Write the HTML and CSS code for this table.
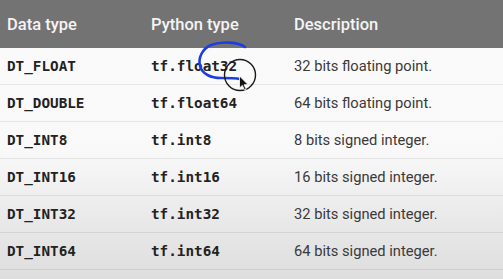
FILE: index.html
```html
<!DOCTYPE html>
<html>
<head>
<meta charset="utf-8">
<link rel="stylesheet" href="styles.css">
</head>
<body>
<div class="table">
  <div class="row head">
    <div class="cell">Data type</div>
    <div class="cell">Python type</div>
    <div class="cell">Description</div>
  </div>
  <div class="row">
    <div class="cell mono">DT_FLOAT</div>
    <div class="cell mono">tf.float32</div>
    <div class="cell desc">32 bits floating point.</div>
  </div>
  <div class="row">
    <div class="cell mono">DT_DOUBLE</div>
    <div class="cell mono">tf.float64</div>
    <div class="cell desc">64 bits floating point.</div>
  </div>
  <div class="row">
    <div class="cell mono">DT_INT8</div>
    <div class="cell mono">tf.int8</div>
    <div class="cell desc">8 bits signed integer.</div>
  </div>
  <div class="row">
    <div class="cell mono">DT_INT16</div>
    <div class="cell mono">tf.int16</div>
    <div class="cell desc">16 bits signed integer.</div>
  </div>
  <div class="row">
    <div class="cell mono">DT_INT32</div>
    <div class="cell mono">tf.int32</div>
    <div class="cell desc">32 bits signed integer.</div>
  </div>
  <div class="row">
    <div class="cell mono">DT_INT64</div>
    <div class="cell mono">tf.int64</div>
    <div class="cell desc">64 bits signed integer.</div>
  </div>
</div>
<svg class="annot" width="503" height="279" viewBox="0 0 503 279">
  <path d="M245 47 C238 42 222 41 211 45 C202 49 198 58 200 66 C202 74 211 78 221 78 C229 78 235 78 240 79" fill="none" stroke="#1c3ee0" stroke-width="2.6" stroke-linecap="round"/>
  <circle cx="240" cy="75" r="15.5" fill="none" stroke="#1a1a1a" stroke-width="1.4"/>
  <path d="M239.5 76 L239.5 88 L242.3 85.4 L244.5 90 L246.2 89.2 L244 84.8 L248 84.6 Z" fill="#111" stroke="#fff" stroke-width="0.8" stroke-linejoin="round"/>
</svg>
</body>
</html>
```
FILE: styles.css
```css
html, body {
  margin: 0;
  padding: 0;
}
body {
  width: 503px;
  height: 279px;
  overflow: hidden;
  position: relative;
  background: linear-gradient(to bottom, #fafafa 0px, #f9f9f9 150px, #e9e9e9 220px, #dedede 279px);
}
.table {
  display: flex;
  flex-direction: column;
}
.row {
  display: grid;
  grid-template-columns: 144px 143px 1fr;
  height: 36px;
  align-items: center;
  border-bottom: 1px solid rgba(0, 0, 0, 0.08);
}
.row.head {
  height: 48px;
  background: #737373;
  border-bottom: none;
}
.cell {
  padding-left: 7px;
  white-space: nowrap;
}
.head .cell {
  font-family: Roboto, "Noto Sans", sans-serif;
  font-weight: 500;
  font-size: 16.5px;
  color: #f4f4f4;
}
.mono {
  font-family: "DejaVu Sans Mono", monospace;
  font-weight: bold;
  font-size: 14.3px;
  color: #222;
}
.desc {
  font-family: Roboto, "Noto Sans", sans-serif;
  font-size: 14.7px;
  color: #3a3a3a;
}
.annot {
  position: absolute;
  left: 0;
  top: 0;
  pointer-events: none;
}
```
